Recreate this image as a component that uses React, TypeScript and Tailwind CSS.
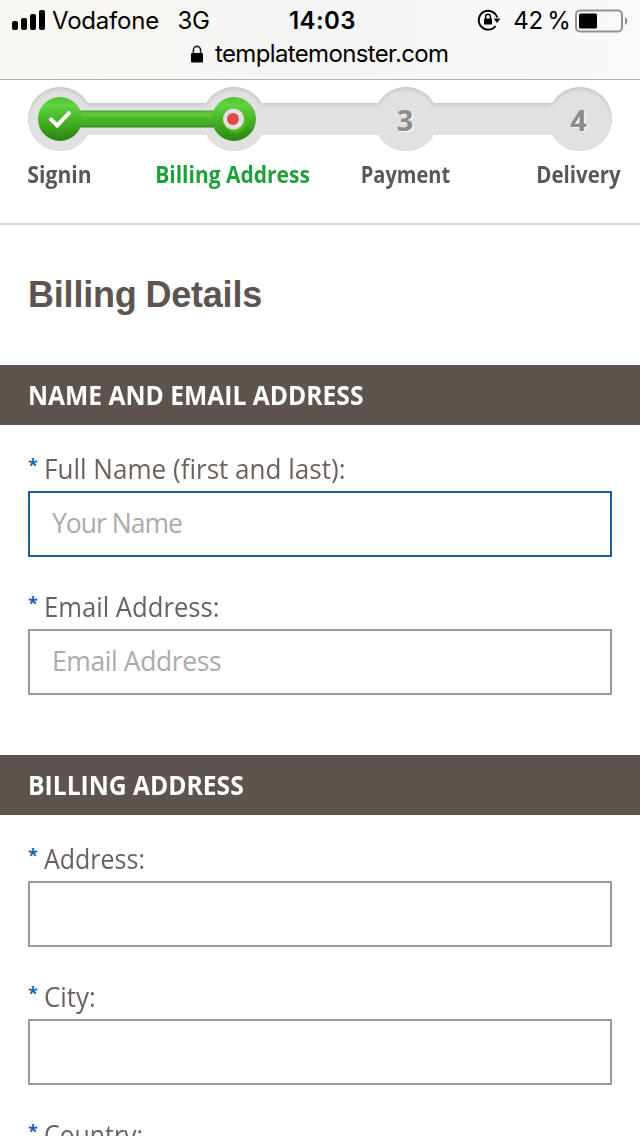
type FieldProps = {
  label: string;
  labelClass: string;
  placeholder?: string;
  focused?: boolean;
  inputClass?: string;
};

function StatusBar() {
  return (
    <header className="h-20 border-b border-[#b2b2b2] bg-linear-to-r from-[#faf8f2] via-[#f4f4f4] to-[#f9f9f9] font-['Inter',sans-serif] text-black">
      <div className="flex h-10 items-center pl-3 pr-[11px] pt-[2px] text-[24px] leading-[38px]">
        <svg className="mb-[2px] h-[22px] w-[34px] shrink-0" viewBox="0 0 34 22">
          <rect x="0" y="12" width="6" height="9" rx="2" />
          <rect x="9" y="9" width="6" height="12" rx="2" />
          <rect x="18" y="5" width="6" height="16" rx="2" />
          <rect x="27" y="1" width="6" height="20" rx="2" />
        </svg>
        <span className="ml-[6px] w-[126px] tracking-[-0.2px]">Vodafone</span>
        <span className="w-[112px] tracking-[-0.2px]">3G</span>
        <span className="w-[189px] font-semibold tracking-[0.4px]">14:03</span>
        <svg className="mb-[2px] h-[24px] w-[24px] shrink-0" viewBox="0 0 24 24">
          <path
            d="M20.2 9.5A9.4 9.4 0 1 0 18.6 18"
            fill="none"
            stroke="#000"
            strokeWidth="1.9"
          />
          <path d="M16.6 10.5h6.8l-3.4 4.6z" />
          <rect x="7" y="10.5" width="8" height="6" rx="0.8" />
          <path d="M8.6 11V8.7a2.4 2.4 0 0 1 4.8 0V11" fill="none" stroke="#000" strokeWidth="1.4" />
        </svg>
        <span className="ml-3 w-[62px] whitespace-nowrap tracking-[-0.3px] [word-spacing:-2px]">42 %</span>
        <svg className="mb-[1px] h-6 w-[54px] shrink-0" viewBox="0 0 54 24">
          <rect x="1" y="1.5" width="46" height="21" rx="4" fill="none" stroke="#919191" strokeWidth="2" />
          <rect x="4" y="4.5" width="18" height="15" rx="1.5" />
          <path d="M50 8c3.2 1.6 3.2 6.4 0 8z" fill="#919191" />
        </svg>
      </div>
      <div className="flex h-7 items-center pl-[191px] text-[24px] leading-7">
        <svg className="h-[18px] w-3 shrink-0" viewBox="0 0 12 18">
          <rect x="0" y="8" width="12" height="9.5" rx="1.3" />
          <path d="M2.4 9V5a3.6 3.6 0 0 1 7.2 0v4" fill="none" stroke="#222" strokeWidth="1.6" />
        </svg>
        <span className="ml-3 tracking-[-0.65px]">templatemonster.com</span>
      </div>
    </header>
  );
}

function Track() {
  return (
    <svg className="block h-16 w-[584px]" viewBox="0 0 584 64">
      <defs>
        <linearGradient id="ball" x1="0" y1="0" x2="0" y2="1">
          <stop offset="0" stopColor="#4dc32d" />
          <stop offset="0.18" stopColor="#5fd440" />
          <stop offset="0.5" stopColor="#49b52a" />
          <stop offset="1" stopColor="#298410" />
        </linearGradient>
        <linearGradient id="bar" gradientUnits="userSpaceOnUse" x1="0" y1="23" x2="0" y2="41">
          <stop offset="0" stopColor="#3fa323" />
          <stop offset="0.22" stopColor="#62cf3a" />
          <stop offset="0.5" stopColor="#4ab32c" />
          <stop offset="0.8" stopColor="#43a823" />
          <stop offset="1" stopColor="#318b17" />
        </linearGradient>
        <filter id="soft" x="-10%" y="-40%" width="120%" height="180%">
          <feGaussianBlur stdDeviation="2" />
        </filter>
        <filter id="glow" x="-30%" y="-30%" width="160%" height="160%">
          <feGaussianBlur stdDeviation="1" />
        </filter>
        <clipPath id="groove">
          <circle cx="32" cy="32" r="32" />
          <circle cx="206" cy="32" r="32" />
          <circle cx="378" cy="32" r="32" />
          <circle cx="552" cy="32" r="32" />
          <rect x="32" y="16" width="520" height="32" />
        </clipPath>
      </defs>
      <g clipPath="url(#groove)">
        <rect width="584" height="64" fill="#c4c4c4" />
        <g fill="#e1e1e1" filter="url(#soft)">
          <circle cx="32" cy="35" r="33" />
          <circle cx="206" cy="35" r="33" />
          <circle cx="378" cy="35" r="33" />
          <circle cx="552" cy="35" r="33" />
          <rect x="32" y="18" width="520" height="36" />
        </g>
      </g>
      <rect x="48" y="23.5" width="142" height="17" fill="url(#bar)" />
      <circle cx="32" cy="32" r="22" fill="url(#ball)" />
      <circle cx="206" cy="32" r="22" fill="url(#ball)" />
      <path
        d="M23 32.3l6.2 6.2L41 26.1"
        fill="none"
        stroke="#fff"
        strokeWidth="4"
        strokeLinecap="round"
      />
      <circle cx="207" cy="33.5" r="11.5" fill="#4fc31f" filter="url(#glow)" />
      <circle cx="205.5" cy="32" r="10.5" fill="#e1e1e1" />
      <circle cx="205" cy="32" r="6" fill="#dd4a48" />
      <g fontFamily="Open Sans, sans-serif" fontSize="29" fontWeight="700" textAnchor="middle">
        <text x="378.5" y="45" fill="#f6f6f6">3</text>
        <text x="377" y="43.5" fill="#8c8c8c">3</text>
        <text x="552" y="45" fill="#f6f6f6">4</text>
        <text x="550.5" y="43.5" fill="#8c8c8c">4</text>
      </g>
    </svg>
  );
}

function Steps() {
  return (
    <nav className="h-[145px] overflow-hidden border-b-2 border-[#d3d3d3] px-7 pt-[7px]">
      <Track />
      <ol className="-ml-[55px] mt-[7px] grid w-[692px] grid-cols-4 text-center text-[22.5px] leading-[34px] font-bold text-[#595857]">
        <li className="scale-x-[0.94]">Signin</li>
        <li className="scale-x-[0.933] text-[#1ea038]">Billing Address</li>
        <li className="scale-x-[0.89]">Payment</li>
        <li className="scale-x-[0.91]">Delivery</li>
      </ol>
    </nav>
  );
}

function SectionBar({ title }: { title: string }) {
  return (
    <h2 className="h-[60px] bg-[#5d5450] pl-7 text-[27px] leading-[60px] font-bold whitespace-nowrap text-white">
      <span className="inline-block origin-left scale-x-[0.913]">{title}</span>
    </h2>
  );
}

function Field({ label, labelClass, placeholder, focused, inputClass = '' }: FieldProps) {
  return (
    <label className="flex flex-col">
      <span className="mb-[2px] flex h-[41px] text-[27px] leading-[41px] whitespace-nowrap text-[#6b625d]">
        <span className="w-4 text-[18px] leading-[35px] font-bold text-[#1c66a8]">*</span>
        <span className={`origin-left ${labelClass}`}>{label}</span>
      </span>
      <input
        type="text"
        placeholder={placeholder}
        className={`h-[66px] w-full border-2 bg-white px-[22px] pb-[3px] text-[26.5px] outline-none placeholder:text-[#ababab] ${
          focused ? 'border-[#1b609d]' : 'border-[#9c9c9c]'
        } ${inputClass}`}
      />
    </label>
  );
}

export default function App() {
  return (
    <div className="h-[1136px] w-[640px] overflow-hidden bg-white font-['Open_Sans','Noto_Sans',sans-serif]">
      <StatusBar />
      <Steps />
      <h1 className="h-[140px] pl-7 pt-[49px] font-['Liberation_Sans',Arial,sans-serif] text-[36px] leading-[42px] font-bold tracking-[-0.2px] text-[#5d5450] [word-spacing:-1px]">
        Billing Details
      </h1>
      <SectionBar title="NAME AND EMAIL ADDRESS" />
      <div className="flex flex-col gap-[29px] px-7 pt-[23px] pb-[60px]">
        <Field
          label="Full Name (first and last):"
          labelClass="scale-x-[0.965]"
          placeholder="Your Name"
          inputClass="tracking-[-1px]"
          focused
        />
        <Field
          label="Email Address:"
          labelClass="scale-x-[0.95]"
          placeholder="Email Address"
          inputClass="tracking-[-0.4px]"
        />
      </div>
      <SectionBar title="BILLING ADDRESS" />
      <div className="flex flex-col gap-[29px] px-7 pt-[23px]">
        <Field label="Address:" labelClass="scale-x-[0.925]" />
        <Field label="City:" labelClass="scale-x-[0.96]" />
        <Field label="Country:" labelClass="scale-x-[0.92]" />
      </div>
    </div>
  );
}
